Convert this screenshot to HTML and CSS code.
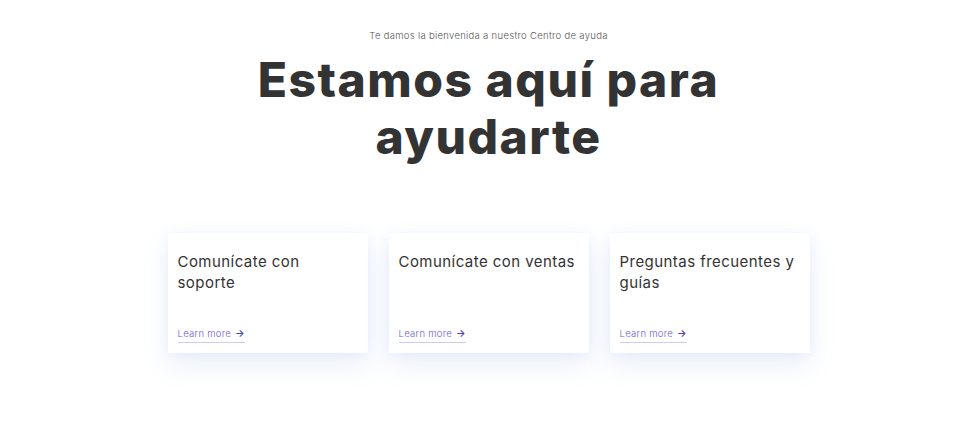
FILE: index.html
```html
<!DOCTYPE html>
<html lang="es">
<head>
<meta charset="utf-8">
<title>Centro de ayuda</title>
<link rel="stylesheet" href="styles.css">
</head>
<body>
<main class="page">
  <header class="hero">
    <p class="eyebrow">Te damos la bienvenida a nuestro Centro de ayuda</p>
    <h1 class="title">Estamos aquí para<br>ayudarte</h1>
  </header>
  <section class="cards">
    <a class="card" href="#">
      <h2 class="card-title">Comunícate con soporte</h2>
      <span class="learn">Learn more <span class="arrow">→</span></span>
    </a>
    <a class="card" href="#">
      <h2 class="card-title">Comunícate con ventas</h2>
      <span class="learn">Learn more <span class="arrow">→</span></span>
    </a>
    <a class="card" href="#">
      <h2 class="card-title">Preguntas frecuentes y guías</h2>
      <span class="learn">Learn more <span class="arrow">→</span></span>
    </a>
  </section>
</main>
</body>
</html>
```
FILE: styles.css
```css
html, body {
  margin: 0;
  padding: 0;
  background: #ffffff;
}
body {
  font-family: "Inter", "Noto Sans", sans-serif;
  color: #333333;
}
.page {
  display: flex;
  flex-direction: column;
  align-items: center;
  padding-top: 30px;
  padding-right: 3px;
  padding-bottom: 40px;
}
.hero {
  text-align: center;
}
.eyebrow {
  margin: 0;
  font-size: 9.5px;
  font-weight: 300;
  color: #555555;
  line-height: 12px;
  letter-spacing: 0.3px;
}
.title {
  margin: 9px 0 0;
  font-size: 48px;
  font-weight: 800;
  line-height: 57px;
  color: #333333;
  letter-spacing: 1.5px;
}
.cards {
  display: flex;
  gap: 21px;
  margin-top: 68px;
}
.card {
  width: 200px;
  height: 120px;
  box-sizing: border-box;
  padding: 18px 10px 10px;
  background: #ffffff;
  box-shadow: 0 12px 24px rgba(100, 140, 230, 0.14), 0 0 10px rgba(100, 140, 230, 0.07);
  display: flex;
  flex-direction: column;
  justify-content: space-between;
  text-decoration: none;
}
.card-title {
  margin: 0;
  font-size: 15px;
  font-weight: 400;
  line-height: 21px;
  color: #333333;
  letter-spacing: 0.45px;
}
.learn {
  align-self: flex-start;
  font-size: 9.5px;
  font-weight: 300;
  color: #6a5ad6;
  line-height: 14px;
  letter-spacing: 0.3px;
  border-bottom: 1px solid #cfc9f4;
  padding-bottom: 1px;
}
.arrow {
  margin-left: 1px;
  font-size: 10px;
  font-weight: 600;
  color: #4b40c4;
}
```
